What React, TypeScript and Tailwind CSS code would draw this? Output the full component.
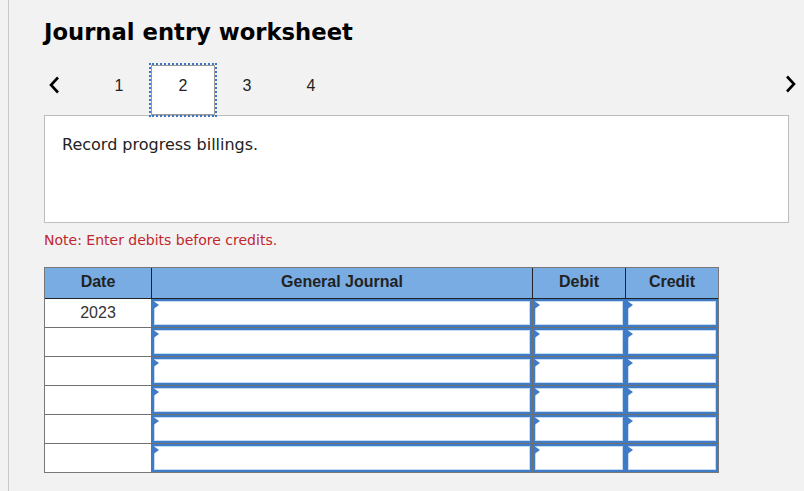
import React from 'react';

const cols = ['Date', 'General Journal', 'Debit', 'Credit'];
const rows = ['2023', '', '', '', '', ''];

function Chevron({ dir }: { dir: 'left' | 'right' }) {
  return (
    <svg width="12" height="18" viewBox="0 0 12 18" className="block">
      <path
        d={dir === 'left' ? 'M10 1.5 L3 9 L10 16.5' : 'M2 1.5 L9 9 L2 16.5'}
        fill="none"
        stroke="#000"
        strokeWidth="2.6"
      />
    </svg>
  );
}

function EntryCell() {
  return (
    <div className="relative h-[28px] bg-white border-l border-[#6f6f6f]">
      <div className="h-full border-2 border-[#3f7cc7] shadow-[inset_0_0_0_1px_#c6dbf2]" />
      <svg width="7" height="10" viewBox="0 0 7 10" className="absolute left-0 top-px">
        <path d="M0 0 L7 5 L0 10 Z" fill="#3f7bc6" />
      </svg>
    </div>
  );
}

export default function App() {
  return (
    <div className="flex h-[491px] bg-[#f2f2f2] font-['DejaVu_Sans',Verdana,sans-serif]">
      <div className="w-2 shrink-0" />
      <div className="w-px shrink-0 bg-[#c9c9c9]" />
      <div className="flex-1 pl-[35px]">
        <h1 className="pt-[19px] text-[22.7px] leading-[26px] font-bold text-black">Journal entry worksheet</h1>

        <div className="relative z-10 mt-[18px] -mb-[2px] flex h-[54px] items-start pr-[7px] font-['Liberation_Sans',Arial,sans-serif] text-[16px] leading-[18px] text-[#222]">
          <div className="ml-[4px] mt-[13px]">
            <Chevron dir="left" />
          </div>
          <div className="ml-[27px] flex">
            <div className="w-[64px] pt-[14px] text-center">1</div>
            <div className="mt-[2px] h-[50px] w-[64px] border border-[#999] bg-white pt-[11px] text-center outline-2 outline-dotted outline-[#3b74c2]">
              2
            </div>
            <div className="w-[64px] pt-[14px] text-center">3</div>
            <div className="w-[64px] pt-[14px] text-center">4</div>
          </div>
          <div className="ml-auto mt-[12px]">
            <Chevron dir="right" />
          </div>
        </div>

        <div className="mr-[15px] h-[108px] border border-[#bdbdbd] bg-white px-[17px] pt-[19px] text-[16px] leading-[20px] text-[#222]">
          Record progress billings.
        </div>

        <p className="mt-[9px] text-[14px] leading-[17px] text-[#c0272d]">Note: Enter debits before credits.</p>

        <div className="mt-[18px] w-[675px] border border-[#777] font-['Liberation_Sans',Arial,sans-serif] text-[16px]">
          <div className="grid grid-cols-[106px_381px_93px_93px] bg-[#78ace3] font-bold text-[#222]">
            {cols.map((c, i) => (
              <div
                key={c}
                className={`flex h-[31px] items-center justify-center border-b border-[#222] pb-[2px] ${i > 0 ? 'border-l' : ''}`}
              >
                {c}
              </div>
            ))}
          </div>
          {rows.map((d, r) => (
            <div
              key={r}
              className={`grid grid-cols-[106px_381px_93px_93px] ${r > 0 ? 'border-t border-[#6f6f6f]' : ''}`}
            >
              <div className="flex h-[28px] items-center justify-center bg-white text-[#333]">{d}</div>
              <EntryCell />
              <EntryCell />
              <EntryCell />
            </div>
          ))}
        </div>
      </div>
    </div>
  );
}
